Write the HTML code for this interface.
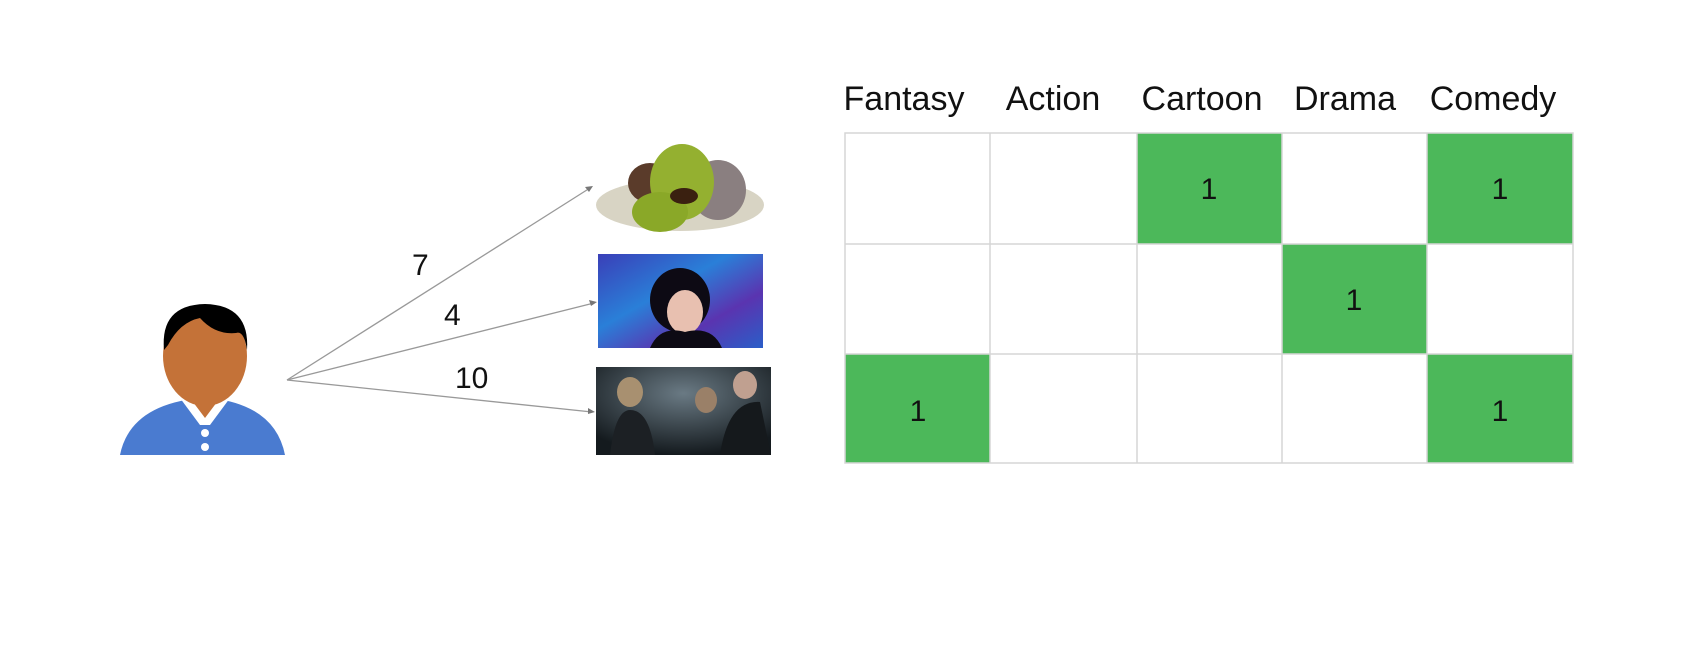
<!DOCTYPE html>
<html><head><style>
html,body{margin:0;padding:0;background:#fff;width:1706px;height:661px;overflow:hidden;font-family:"Liberation Sans",Arial,sans-serif;}
svg{position:absolute;left:0;top:0}
</style></head><body>
<svg width="1706" height="661" viewBox="0 0 1706 661" xmlns="http://www.w3.org/2000/svg">
<defs>
<linearGradient id="blu" x1="0" y1="0" x2="1" y2="1"><stop offset="0" stop-color="#3a3fb8"/><stop offset="0.4" stop-color="#2a7fd8"/><stop offset="0.7" stop-color="#5a34b0"/><stop offset="1" stop-color="#2a5ec8"/></linearGradient>
<radialGradient id="hp" cx="0.5" cy="0.3" r="0.7"><stop offset="0" stop-color="#6a7a84"/><stop offset="1" stop-color="#141a1e"/></radialGradient>
</defs>
<!-- person -->
<path d="M120 455 Q130 405 200 398 L210 398 Q275 405 285 455 Z" fill="#4a7bd0"/>
<path d="M180 398 L200 425 L210 425 L230 398 L222 392 L188 392 Z" fill="#fff"/>
<path d="M190 398 L205 418 L220 398 Z" fill="#c47238"/>
<circle cx="205" cy="433" r="4" fill="#fff"/><circle cx="205" cy="447" r="4" fill="#fff"/>
<ellipse cx="205" cy="356" rx="42" ry="50" fill="#c47238"/>
<path d="M164 350 Q160 305 205 304 Q250 305 247 350 Q244 330 236 333 Q215 335 200 318 Q180 322 168 345 Z" fill="#000"/>
<!-- arrows -->
<g stroke="#999" stroke-width="1.3" fill="none">
<line x1="287" y1="380" x2="590" y2="188"/>
<line x1="287" y1="380" x2="594" y2="303"/>
<line x1="287" y1="380" x2="592" y2="412"/>
</g>
<g fill="#777"><path d="M593 186 l-8 1 l4 5z"/><path d="M597 302 l-8 -2 l2 6z"/><path d="M595 412 l-7 -4 l0 6z"/></g>
<g font-size="30" fill="#111" font-family="Liberation Sans, sans-serif">
<text x="412" y="275">7</text>
<text x="444" y="325">4</text>
<text x="455" y="388">10</text>
</g>
<!-- shrek -->
<ellipse cx="680" cy="205" rx="84" ry="26" fill="#d8d4c4"/>
<ellipse cx="650" cy="183" rx="22" ry="20" fill="#5a3b2a"/>
<ellipse cx="718" cy="190" rx="28" ry="30" fill="#8a7f80"/>
<ellipse cx="682" cy="182" rx="32" ry="38" fill="#94b030"/>
<ellipse cx="660" cy="212" rx="28" ry="20" fill="#8aa828"/>
<ellipse cx="684" cy="196" rx="14" ry="8" fill="#3a2010"/>
<!-- middle -->
<rect x="598" y="254" width="165" height="94" fill="url(#blu)"/>
<ellipse cx="680" cy="300" rx="30" ry="32" fill="#0d0a14"/>
<ellipse cx="685" cy="312" rx="18" ry="22" fill="#e8c0b0"/>
<path d="M650 348 Q660 325 685 332 Q712 325 722 348 Z" fill="#0d0a14"/>
<!-- harry potter -->
<rect x="596" y="367" width="175" height="88" fill="url(#hp)"/>
<ellipse cx="630" cy="392" rx="13" ry="15" fill="#a89070"/>
<ellipse cx="706" cy="400" rx="11" ry="13" fill="#9a8068"/>
<ellipse cx="745" cy="385" rx="12" ry="14" fill="#c0a090"/>
<path d="M610 455 Q615 410 630 410 Q650 410 655 455 Z" fill="#1c2024"/>
<path d="M720 455 Q728 400 760 402 L771 455 Z" fill="#15191c"/>
<!-- table headers -->
<g font-size="34" fill="#111" text-anchor="middle" font-family="Liberation Sans, sans-serif">
<text x="904" y="110">Fantasy</text>
<text x="1053" y="110">Action</text>
<text x="1202" y="110">Cartoon</text>
<text x="1345" y="110">Drama</text>
<text x="1493" y="110">Comedy</text>
</g>
<!-- green cells -->
<g fill="#4cb85a">
<rect x="1137" y="133" width="145" height="111"/>
<rect x="1427" y="133" width="146" height="111"/>
<rect x="1282" y="244" width="145" height="110"/>
<rect x="845" y="354" width="145" height="109"/>
<rect x="1427" y="354" width="146" height="109"/>
</g>
<g stroke="#d6d6d6" stroke-width="1.5" fill="none">
<rect x="845" y="133" width="728" height="330"/>
<line x1="990" y1="133" x2="990" y2="463"/>
<line x1="1137" y1="133" x2="1137" y2="463"/>
<line x1="1282" y1="133" x2="1282" y2="463"/>
<line x1="1427" y1="133" x2="1427" y2="463"/>
<line x1="845" y1="244" x2="1573" y2="244"/>
<line x1="845" y1="354" x2="1573" y2="354"/>
</g>
<g font-size="30" fill="#111" text-anchor="middle" font-family="Liberation Sans, sans-serif">
<text x="1209" y="199">1</text>
<text x="1500" y="199">1</text>
<text x="1354" y="310">1</text>
<text x="918" y="421">1</text>
<text x="1500" y="421">1</text>
</g>
</svg>
</body></html>
